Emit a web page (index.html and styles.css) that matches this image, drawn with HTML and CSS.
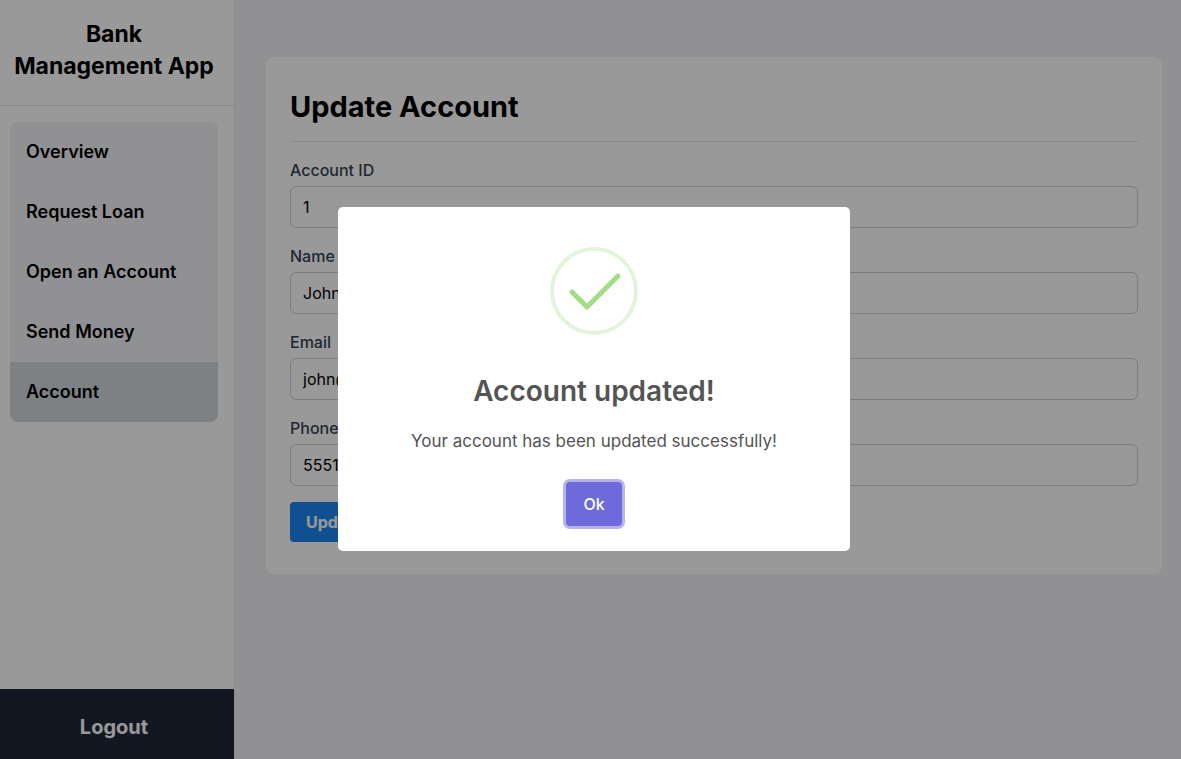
FILE: index.html
```
<!DOCTYPE html>
<html lang="en">
<head>
<meta charset="utf-8">
<meta name="viewport" content="width=device-width, initial-scale=1">
<title>Bank Management App</title>
<link rel="stylesheet" href="styles.css">
</head>
<body>
<div class="app">
  <aside class="sidebar">
    <h2 class="brand">Bank<br>Management App</h2>
    <nav class="menu">
      <a class="menu-item" href="#">Overview</a>
      <a class="menu-item" href="#">Request Loan</a>
      <a class="menu-item" href="#">Open an Account</a>
      <a class="menu-item" href="#">Send Money</a>
      <a class="menu-item active" href="#" aria-current="page">Account</a>
    </nav>
    <button class="logout" type="button">Logout</button>
  </aside>
  <main class="content">
    <form class="card">
      <h1 class="card-title">Update Account</h1>
      <div class="field">
        <label for="account-id">Account ID</label>
        <input id="account-id" type="text" value="1">
      </div>
      <div class="field">
        <label for="name">Name</label>
        <input id="name" type="text" value="John">
      </div>
      <div class="field">
        <label for="email">Email</label>
        <input id="email" type="text" value="john@">
      </div>
      <div class="field">
        <label for="phone">Phone</label>
        <input id="phone" type="text" value="5551">
      </div>
      <button class="submit" type="submit">Update</button>
    </form>
  </main>
</div>
<div class="overlay">
  <div class="dialog" role="dialog" aria-modal="true" aria-labelledby="dialog-title">
    <svg class="success" viewBox="0 0 88 88" fill="none" aria-hidden="true">
      <circle cx="44" cy="44" r="42" stroke="#a5dc86" stroke-opacity=".3" stroke-width="4"/>
      <path d="M22 45L37 60L68 29" stroke="#a5dc86" stroke-width="5" stroke-linecap="round" stroke-linejoin="round"/>
    </svg>
    <h2 class="dialog-title" id="dialog-title">Account updated!</h2>
    <p class="dialog-text">Your account has been updated successfully!</p>
    <button class="confirm" type="button">Ok</button>
  </div>
</div>
</body>
</html>
```
FILE: styles.css
```
* {
  box-sizing: border-box;
}

body {
  margin: 0;
  font-family: Inter, "Liberation Sans", sans-serif;
  font-size: 16px;
  line-height: 24px;
  color: #000;
  background: #f2f2f7;
}

h1, h2, p {
  margin: 0;
}

button, input {
  font: inherit;
}

.app {
  display: flex;
  min-height: 100vh;
}

.sidebar {
  display: flex;
  flex-direction: column;
  flex: 0 0 234px;
  background: #fff;
  box-shadow: 0 0 2px rgba(0, 0, 0, .1);
}

.brand {
  padding: 18px 6px 23px 0;
  border-bottom: 1px solid #dedede;
  font-size: 23px;
  line-height: 32px;
  font-weight: 700;
  text-align: center;
}

.menu {
  margin: 16px 16px 16px 10px;
  border-radius: 8px;
  background: #f2f2f7;
  overflow: hidden;
}

.menu-item {
  display: block;
  padding: 16px;
  font-size: 18px;
  line-height: 28px;
  font-weight: 600;
  color: #000;
  text-decoration: none;
}

.menu-item.active {
  background: #d0d7da;
}

.logout {
  margin-top: auto;
  padding: 24px 6px 18px 0;
  border: 0;
  background: #1f2937;
  color: #fff;
  font-size: 20px;
  line-height: 28px;
  font-weight: 700;
}

.content {
  flex: 1;
  padding: 57px 19px 32px 32px;
}

.card {
  padding: 32px 24px;
  border-radius: 8px;
  background: #fff;
}

.card-title {
  padding-bottom: 16px;
  border-bottom: 1px solid #e5e5e5;
  font-size: 29px;
  line-height: 36px;
  font-weight: 700;
}

.field {
  display: flex;
  flex-direction: column;
  gap: 4px;
  margin: 16px 0;
}

.field label {
  font-weight: 500;
  color: #334554;
}

.field input {
  width: 100%;
  padding: 8px 12px;
  border: 1px solid #d1d1d1;
  border-radius: 6px;
  background: #fff;
  color: #000;
}

.submit {
  display: block;
  padding: 8px 16px;
  border: 0;
  border-radius: 4px;
  background: #1c86f2;
  color: #fff;
  font-weight: 700;
}

.overlay {
  position: fixed;
  inset: 0;
  display: flex;
  align-items: center;
  justify-content: center;
  padding: 0 0 1px 7px;
  background: rgba(0, 0, 0, .4);
}

.dialog {
  display: flex;
  flex-direction: column;
  align-items: center;
  width: 512px;
  max-width: 100%;
  padding: 40px 16px 25px;
  border-radius: 5px;
  background: #fff;
  color: #545454;
  text-align: center;
}

.success {
  width: 88px;
  height: 88px;
}

.dialog-title {
  margin-top: 38px;
  font-size: 28px;
  line-height: 36px;
  font-weight: 600;
}

.dialog-text {
  margin-top: 18px;
  font-size: 17px;
  line-height: 28px;
}

.confirm {
  margin-top: 27px;
  padding: 10px 17px;
  border: 0;
  border-radius: 4px;
  background: #6e6adb;
  box-shadow: 0 0 0 3px #b6b4ec;
  color: #fff;
  font-weight: 500;
}
```
